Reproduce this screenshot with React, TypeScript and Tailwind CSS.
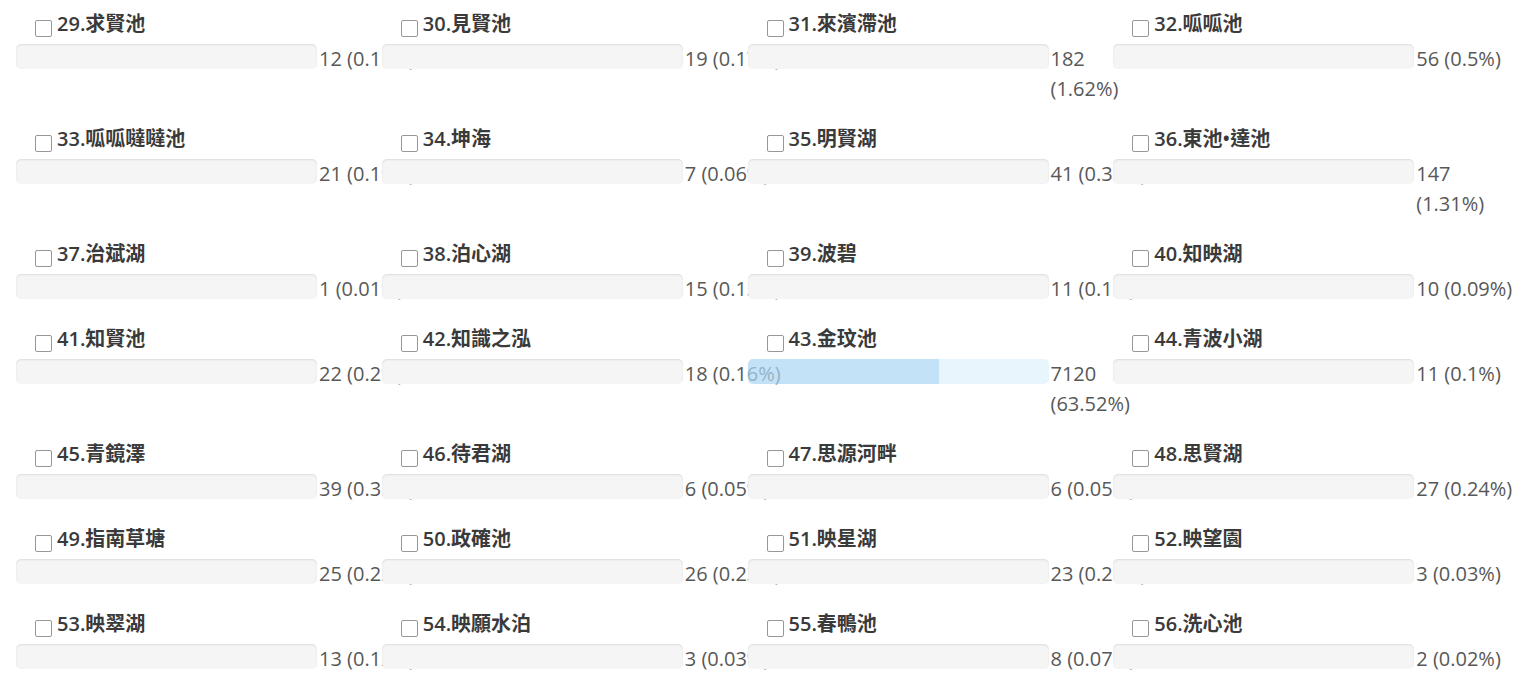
import React from 'react';

type Pond = { no: number; name: string; votes: number };

const TOTAL = 11209;

const ponds: Pond[] = [
  { no: 29, name: '求賢池', votes: 12 },
  { no: 30, name: '見賢池', votes: 19 },
  { no: 31, name: '來濱滯池', votes: 182 },
  { no: 32, name: '呱呱池', votes: 56 },
  { no: 33, name: '呱呱噠噠池', votes: 21 },
  { no: 34, name: '坤海', votes: 7 },
  { no: 35, name: '明賢湖', votes: 41 },
  { no: 36, name: '東池•達池', votes: 147 },
  { no: 37, name: '治斌湖', votes: 1 },
  { no: 38, name: '泊心湖', votes: 15 },
  { no: 39, name: '波碧', votes: 11 },
  { no: 40, name: '知映湖', votes: 10 },
  { no: 41, name: '知賢池', votes: 22 },
  { no: 42, name: '知識之泓', votes: 18 },
  { no: 43, name: '金玟池', votes: 7120 },
  { no: 44, name: '青波小湖', votes: 11 },
  { no: 45, name: '青鏡澤', votes: 39 },
  { no: 46, name: '待君湖', votes: 6 },
  { no: 47, name: '思源河畔', votes: 6 },
  { no: 48, name: '思賢湖', votes: 27 },
  { no: 49, name: '指南草塘', votes: 25 },
  { no: 50, name: '政確池', votes: 26 },
  { no: 51, name: '映星湖', votes: 23 },
  { no: 52, name: '映望園', votes: 3 },
  { no: 53, name: '映翠湖', votes: 13 },
  { no: 54, name: '映願水泊', votes: 3 },
  { no: 55, name: '春鴨池', votes: 8 },
  { no: 56, name: '洗心池', votes: 2 },
];

const leader = Math.max(...ponds.map(p => p.votes));

const percent = (votes: number) => {
  const value = Math.round((votes / TOTAL) * 10000) / 100;
  return `${value}%`;
};

const PondItem = ({ pond }: { pond: Pond }) => {
  const pct = percent(pond.votes);
  const isLeader = pond.votes === leader;
  // long counts break onto a second line under the number
  const wraps = pond.votes >= 100;

  return (
    <div className="mb-[11px]">
      <label className="flex items-center h-[30px] mt-[9px] mb-[5px] pl-[19px]">
        <span className="relative top-[4px] w-[17px] h-[17px] shrink-0 border border-[#979797] rounded-[2px] bg-white" />
        <span className="ml-[5px] text-[20px] font-semibold text-[#3a3a3a] whitespace-nowrap">
          {pond.no}.{pond.name}
        </span>
      </label>

      <div className="flex items-start">
        {isLeader ? (
          <div className="relative w-[82.3%] h-[25px] shrink-0 flex rounded-[5px] overflow-hidden opacity-70 shadow-[inset_0_1px_2px_rgba(0,0,0,0.08)]">
            <div className="h-full bg-[#acd7f5]" style={{ width: `${(pond.votes / TOTAL) * 100}%` }} />
            <div className="h-full flex-1 bg-[#e1f1fc]" />
          </div>
        ) : (
          <div className="relative w-[82.3%] h-[25px] shrink-0 rounded-[5px] bg-[#f5f5f5] shadow-[inset_0_1px_2px_rgba(0,0,0,0.1)]" />
        )}

        {wraps ? (
          <div className="pl-[2px] text-[20px] leading-[30px] text-[#585858]">
            <div>{pond.votes}</div>
            <div className="whitespace-nowrap">({pct})</div>
          </div>
        ) : (
          <span className="pl-[2px] text-[20px] leading-[30px] text-[#585858] whitespace-nowrap">
            {pond.votes} ({pct})
          </span>
        )}
      </div>
    </div>
  );
};

export default function App() {
  return (
    <div
      className="bg-white min-h-screen"
      style={{ fontFamily: '"Open Sans", "Noto Sans CJK TC", sans-serif' }}
    >
      <div className="grid grid-cols-4 w-[1463px] ml-4">
        {ponds.map(p => (
          <PondItem key={p.no} pond={p} />
        ))}
      </div>
    </div>
  );
}
